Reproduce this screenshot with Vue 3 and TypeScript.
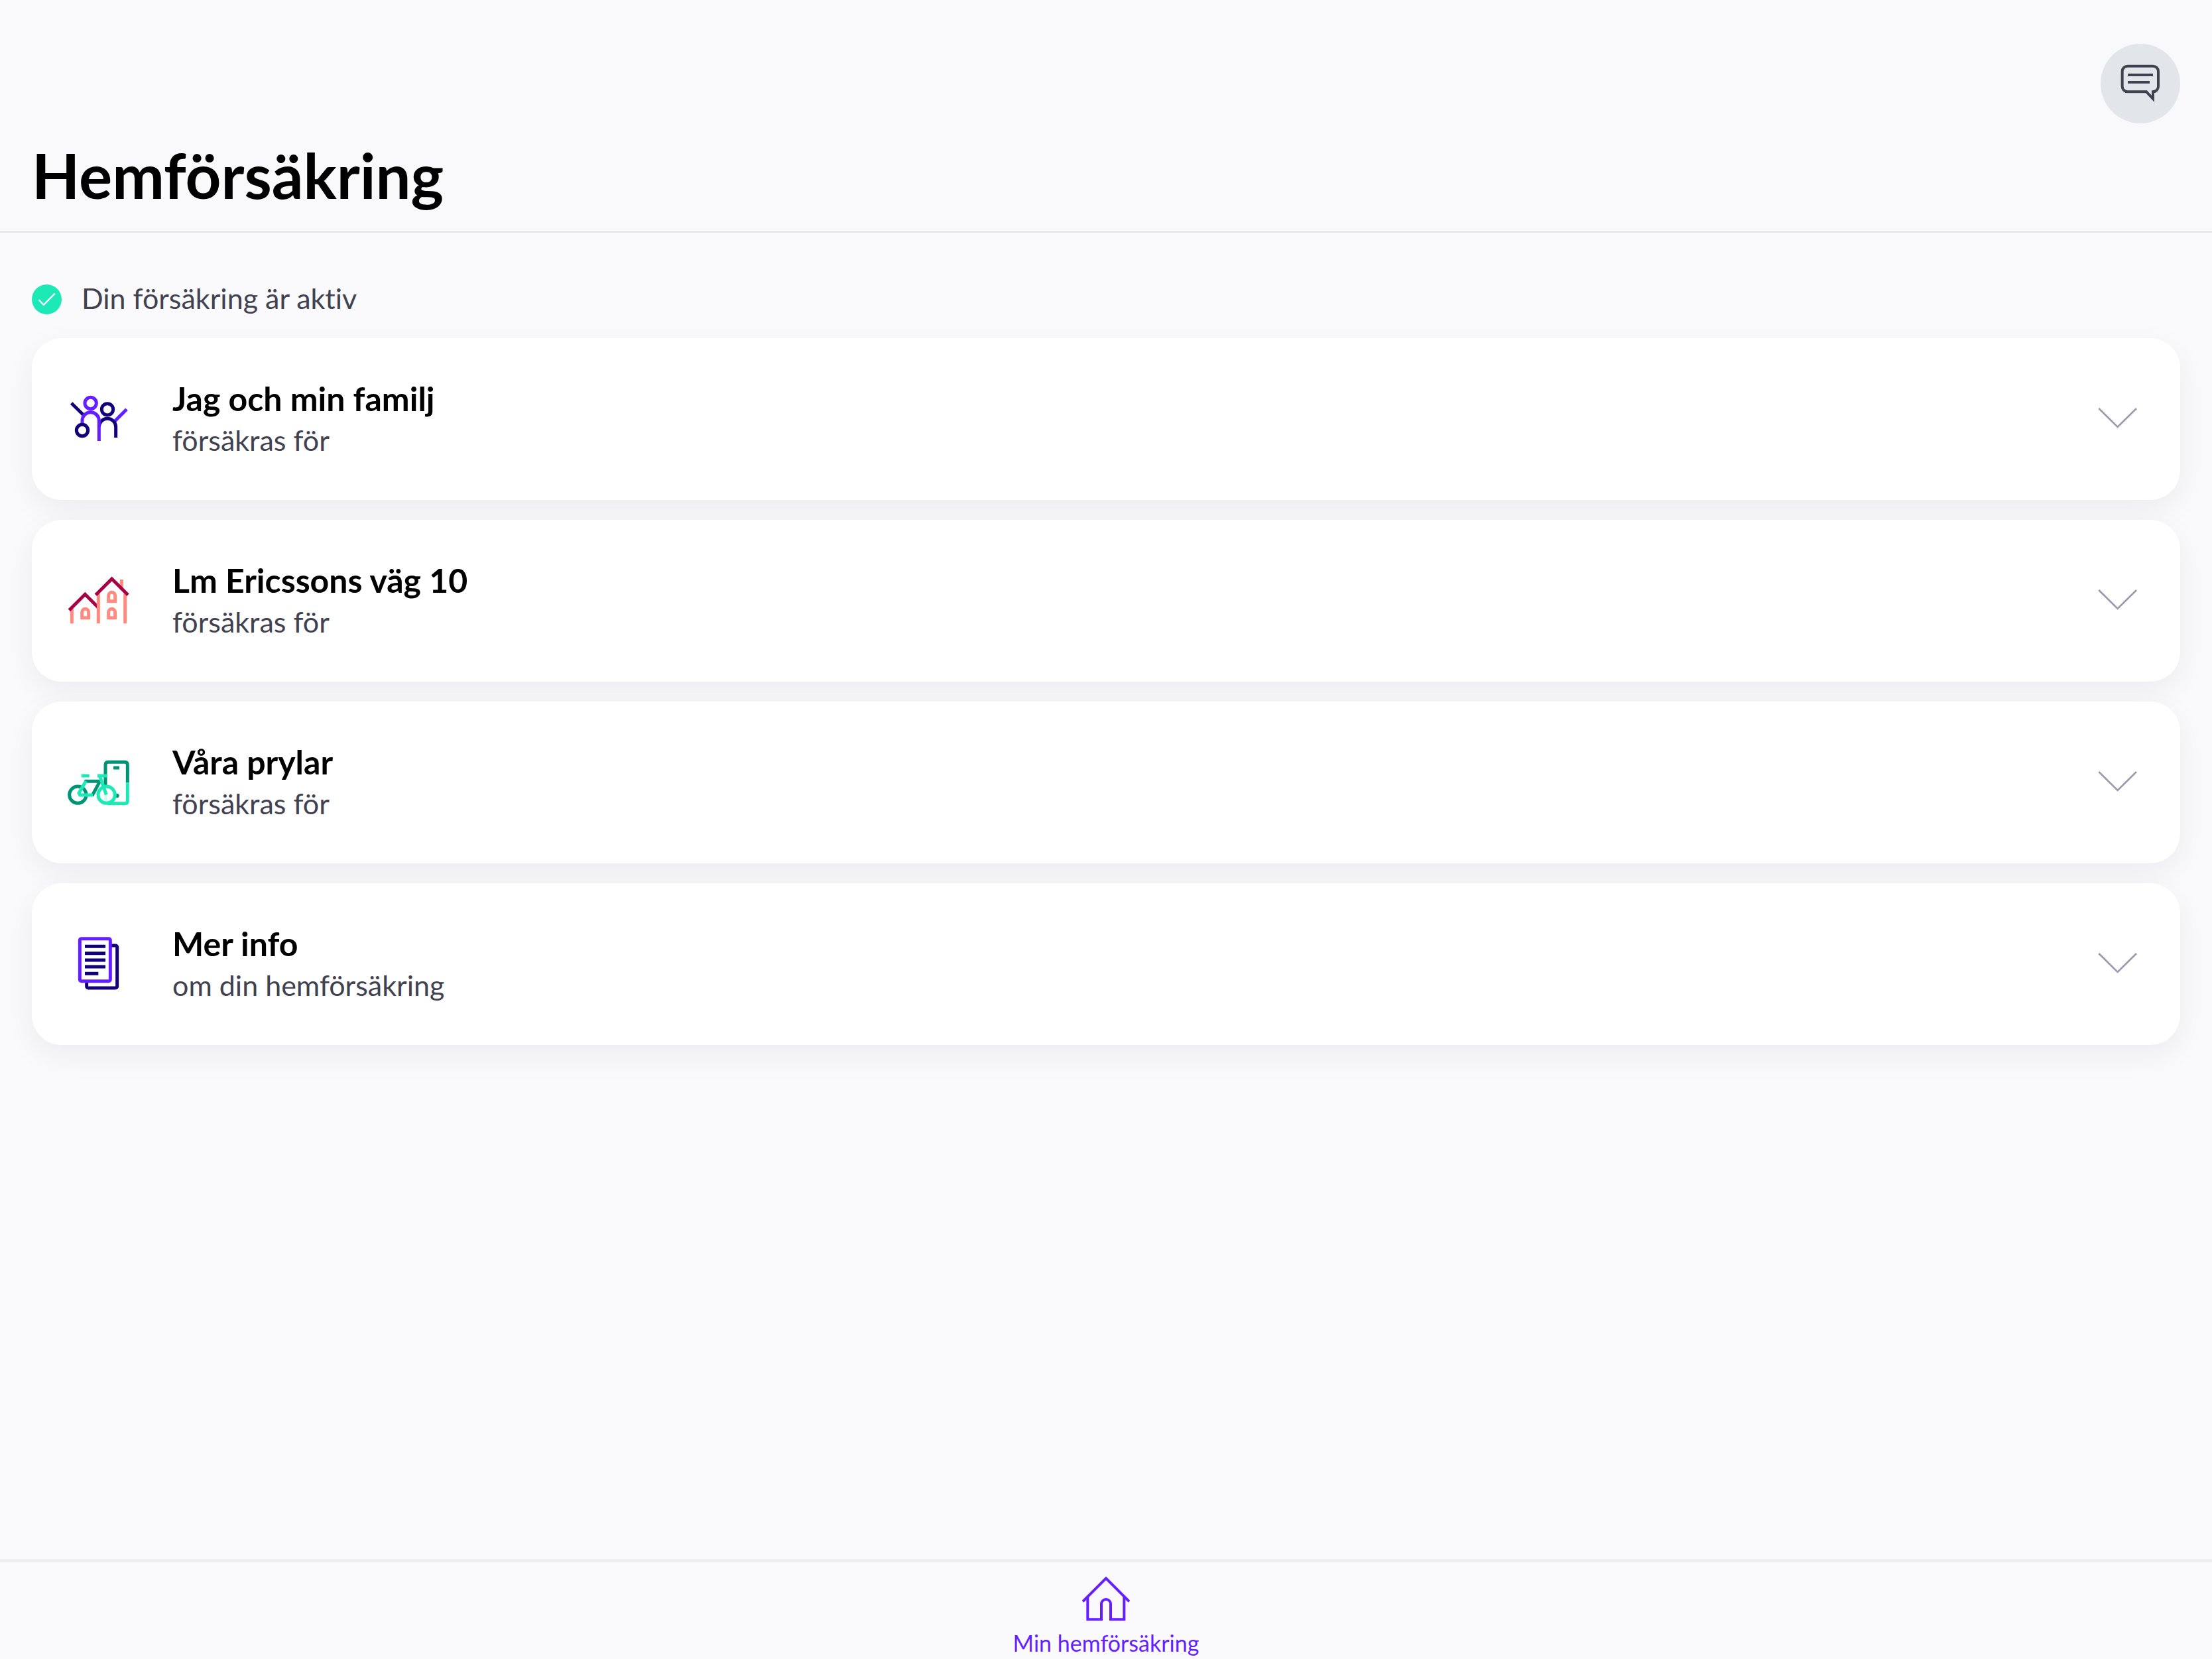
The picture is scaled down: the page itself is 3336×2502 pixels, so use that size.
<script setup lang="ts">
import { ref } from 'vue'

type IconName = 'family' | 'house' | 'things' | 'documents'

interface Section {
  icon: IconName
  title: string
  subtitle: string
}

const sections: Section[] = [
  { icon: 'family', title: 'Jag och min familj', subtitle: 'försäkras för' },
  { icon: 'house', title: 'Lm Ericssons väg 10', subtitle: 'försäkras för' },
  { icon: 'things', title: 'Våra prylar', subtitle: 'försäkras för' },
  { icon: 'documents', title: 'Mer info', subtitle: 'om din hemförsäkring' },
]

const selected = ref<IconName | null>(null)

function toggle(icon: IconName): void {
  selected.value = selected.value === icon ? null : icon
}
</script>

<template>
  <div class="page">
    <header class="header">
      <button class="chat" type="button" aria-label="Chatt">
        <svg viewBox="84 48 360 360" fill="none" stroke="currentColor" stroke-width="12">
          <path
            stroke-miterlimit="10"
            d="M206 149H321a24 24 0 0 1 24 24V241a24 24 0 0 1-24 24V297L291 265H206a24 24 0 0 1-24-24V173a24 24 0 0 1 24-24Z"
          />
          <path d="M207 189H321M207 222H306" />
        </svg>
      </button>
      <h1>Hemförsäkring</h1>
    </header>

    <main class="main">
      <p class="status">
        <svg viewBox="54 57 136 136" fill="none" aria-hidden="true">
          <circle cx="122" cy="125" r="68" fill="#1de9b6" />
          <path d="M86 127L108 150L159 98" stroke="#fff" stroke-width="7" />
        </svg>
        <span>Din försäkring är aktiv</span>
      </p>

      <ul class="cards">
        <li v-for="section in sections" :key="section.icon">
          <button
            class="card"
            type="button"
            :aria-expanded="selected === section.icon"
            @click="toggle(section.icon)"
          >
            <svg
              v-if="section.icon === 'family'"
              class="icon"
              viewBox="0 6 420 360"
              fill="none"
              stroke-width="15"
              aria-hidden="true"
            >
              <path class="navy" d="M83 114L138 168" />
              <path class="violet" d="M280 195L333 142" />
              <path class="navy" d="M208 222a38 38 0 0 1 76 0V270" />
              <path class="violet" d="M132 210V193a38 38 0 0 1 76 0V285" />
              <circle class="violet" cx="170" cy="114" r="26" />
              <circle class="navy" cx="246" cy="142" r="26" />
              <circle class="navy" cx="132" cy="237" r="26" />
            </svg>
            <svg
              v-else-if="section.icon === 'house'"
              class="icon"
              viewBox="0 -12 420 360"
              fill="none"
              stroke-width="15"
              aria-hidden="true"
            >
              <path class="coral" d="M85 202V271" />
              <path class="wine" d="M73 211L145 139L203 197" />
              <path class="coral" d="M205 136V271M326 136V271M310 72V118" />
              <path
                class="coral"
                d="M131 245V220a15 15 0 0 1 30 0V245ZM251 245V220a15 15 0 0 1 30 0V245ZM251 170V145a15 15 0 0 1 30 0V170Z"
              />
              <path class="wine" d="M193 142L266 69L339 142" />
            </svg>
            <svg
              v-else-if="section.icon === 'things'"
              class="icon"
              viewBox="0 0 420 360"
              fill="none"
              stroke-width="15"
              aria-hidden="true"
            >
              <path class="green" d="M237 195V100q0-12 12-12H325q12 0 12 12V181M273 114H300" />
              <circle cx="289" cy="240" r="10" fill="#009476" />
              <path class="mint" d="M337 181V263q0 12-12 12H246" />
              <circle class="green" cx="112" cy="236" r="38" />
              <circle class="mint" cx="242" cy="236" r="38" fill="#fff" />
              <path d="M238 236V266" stroke="#1de9b6" stroke-opacity="0.2" />
              <path class="green" d="M142 175H212L177 240" />
              <path class="mint" d="M149 174L117 228L122 237H180M128 150H164M201 150H245M211 150L241 236" />
            </svg>
            <svg
              v-else
              class="icon"
              viewBox="0 12 420 360"
              fill="none"
              stroke-width="15"
              aria-hidden="true"
            >
              <rect class="navy" x="152" y="108" width="138" height="192" rx="7" />
              <rect class="violet" x="121" y="77" width="138" height="192" rx="7" fill="#fff" />
              <path class="navy" d="M144 112H237M144 143H237M144 174H237M144 204H237M144 235H205" />
            </svg>

            <span class="text">
              <span class="title">{{ section.title }}</span>
              <span class="subtitle">{{ section.subtitle }}</span>
            </span>

            <svg
              class="chevron"
              viewBox="192 306 180 180"
              fill="none"
              stroke="#9b9aae"
              stroke-width="8"
              aria-hidden="true"
            >
              <path d="M196 348L281 432L366 348" />
            </svg>
          </button>
        </li>
      </ul>
    </main>

    <nav class="tabs">
      <a class="tab" href="#hem" aria-current="page">
        <svg viewBox="398 138 216 216" fill="none" stroke="currentColor" stroke-width="12" aria-hidden="true">
          <path d="M401 256L506 151L611 256" />
          <path d="M423 236V337H485V267a21 21 0 0 1 42 0V337H588V236" />
        </svg>
        <span>Min hemförsäkring</span>
      </a>
    </nav>
  </div>
</template>

<style>
body {
  margin: 0;
  background: #fafafc;
}
</style>

<style scoped>
.page {
  display: flex;
  flex-direction: column;
  min-height: 100vh;
  background: #fafafc;
  color: #000;
  font-family: Lato, 'Open Sans', sans-serif;
  font-variant-ligatures: none;
}

button {
  border: 0;
  padding: 0;
  color: inherit;
  font: inherit;
  font-variant-ligatures: none;
  cursor: pointer;
}

svg {
  display: block;
  flex: none;
}

.header {
  display: flex;
  flex-direction: column;
  gap: 24px;
  padding: 66px 48px 30px;
  border-bottom: 3px solid #e8e8ea;
  background: #f9f9fc;
}

.chat {
  align-self: flex-end;
  width: 120px;
  height: 120px;
  border-radius: 50%;
  background: #e2e6ea;
  color: #414150;
}

.chat svg {
  width: 120px;
  height: 120px;
}

h1 {
  margin: 0;
  font-size: 94px;
  font-weight: 700;
  line-height: 108px;
}

.main {
  flex: 1;
  padding: 75px 48px;
}

.status {
  display: flex;
  align-items: flex-end;
  gap: 30px;
  margin: 0 0 36px;
  color: #414150;
  font-size: 43px;
  line-height: 48px;
}

.status svg {
  width: 45px;
  height: 45px;
}

.cards {
  display: flex;
  flex-direction: column;
  gap: 30px;
  margin: 0;
  padding: 0;
  list-style: none;
}

.card {
  display: flex;
  align-items: center;
  gap: 40px;
  width: 100%;
  padding: 57px 64px 57px 32px;
  border-radius: 45px;
  background: #fff;
  box-shadow: 0 15px 48px rgba(20, 16, 60, 0.06);
  text-align: left;
}

.icon {
  width: 140px;
  height: 120px;
}

.text {
  display: flex;
  flex: 1;
  flex-direction: column;
  padding-top: 4px;
}

.title {
  font-size: 50px;
  font-weight: 700;
  line-height: 60px;
}

.subtitle {
  color: #414150;
  font-size: 43px;
  line-height: 66px;
}

.chevron {
  width: 60px;
  height: 60px;
}

.tabs {
  display: flex;
  justify-content: center;
  border-top: 3px solid #e8e8ea;
}

.tab {
  display: flex;
  flex-direction: column;
  align-items: center;
  gap: 6px;
  padding-top: 21px;
  color: #651eff;
  font-size: 34px;
  line-height: 48px;
  text-decoration: none;
}

.tab svg {
  width: 72px;
  height: 72px;
}

.navy {
  stroke: #11007a;
}

.violet {
  stroke: #651eff;
}

.coral {
  stroke: #ff8a80;
}

.wine {
  stroke: #aa0045;
}

.green {
  stroke: #009476;
}

.mint {
  stroke: #1de9b6;
}
</style>
